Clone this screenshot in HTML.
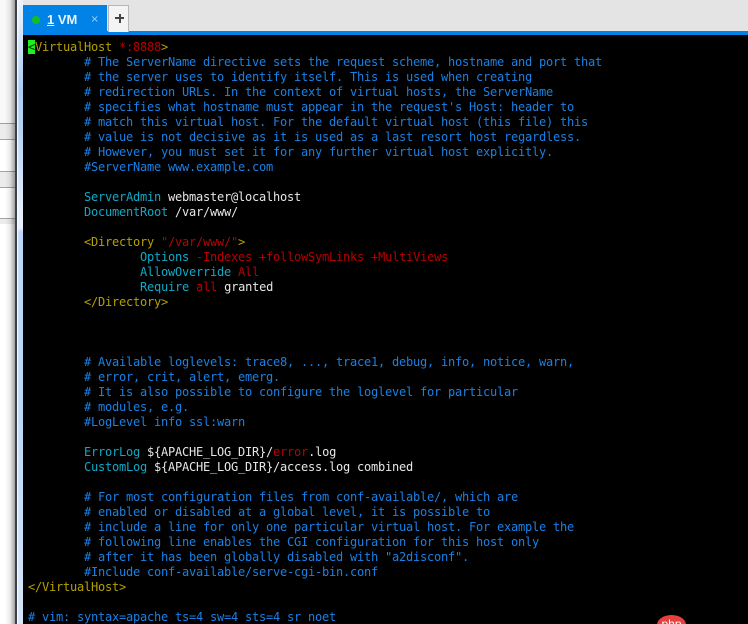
<!DOCTYPE html>
<html><head><meta charset="utf-8"><style>
html,body{margin:0;padding:0;width:748px;height:624px;overflow:hidden;background:#000}
#w{position:relative;width:748px;height:624px;overflow:hidden;background:#000}
#l{position:absolute;left:0;top:0;width:15px;height:624px;background:#fff}
.band{position:absolute;left:0;width:15px;background:#ececec}
#sh{position:absolute;left:0;top:0;width:15px;height:624px;background:linear-gradient(90deg,rgba(0,0,0,0) 0,rgba(0,0,0,0) 5px,rgba(0,0,0,.08) 10px,rgba(0,0,0,.36) 15px)}
.r{position:absolute;left:0;width:15px;height:1px;background:#a4a4a4}
#d{position:absolute;left:15px;top:0;width:2px;height:624px;background:#3c4048}
#b{position:absolute;left:17px;top:0;width:6px;height:624px;background:linear-gradient(90deg,#fff 0,rgba(255,255,255,0) 2px,rgba(255,255,255,0) 100%),linear-gradient(180deg,#eef4fc 0,#a9cdf2 90px,#b4d4f6 130px,#e6f0fb 210px,#e8f1fb 228px,#bcd8f8 232px,#bcd8f8 420px,#d4e6fa 624px)}
#bar{position:absolute;left:23px;top:0;width:725px;height:31px;background:#e4e4e4}
#strip{position:absolute;left:23px;top:31px;width:725px;height:4px;background:#0082e6}
#tab{position:absolute;left:23px;top:5px;width:84px;height:27px;background:#0082e6}
#dot{position:absolute;left:32px;top:16px;width:8px;height:8px;border-radius:50%;background:#10c020}
#t1{position:absolute;left:47px;top:12px;font:bold 13px/16px "Liberation Sans",sans-serif;color:#e8f2ff;white-space:pre}
#x{position:absolute;left:90.5px;top:13px;font:10px/14px "DejaVu Sans",sans-serif;color:#a8d0f4}
#plus{position:absolute;left:108px;top:5px;width:19px;height:26px;background:#f4f4f4;border:1px solid #b8b8b8;border-bottom:0}
#p1{position:absolute;left:115px;top:17px;width:9px;height:2px;background:#444}
#p2{position:absolute;left:118.5px;top:13.5px;width:2px;height:9px;background:#444}
#code{position:absolute;left:28px;top:40px;margin:0;font:12px/15px "DejaVu Sans Mono",monospace;letter-spacing:-.224px;color:#e6e6e6;white-space:pre}
.c{color:#1a80e4}.y{color:#b4a000}.e{color:#b80000}.a{color:#10a8c4}
.k{background:#20f020;color:#003000}
#wm{position:absolute;left:657px;top:615px;width:29px;height:20px;border-radius:50%;background:#e8403c;color:#fff;font:12px/19px "Liberation Sans",sans-serif;text-align:center}
</style></head><body><div id="w">
<div id="l"></div>
<div class="band" style="top:0;height:123px;background:#f8f8f8"></div>
<div class="band" style="top:124px;height:15px"></div>
<div class="band" style="top:171px;height:16px"></div>
<div class="band" style="top:218px;height:6px"></div>
<div class="r" style="top:123px;background:#7fa8d8"></div>
<div class="r" style="top:139px"></div>
<div class="r" style="top:171px"></div>
<div class="r" style="top:187px"></div>
<div class="r" style="top:218px"></div>
<div id="sh"></div>
<div id="d"></div><div id="b"></div>
<div id="bar"></div><div id="strip"></div><div id="tab"></div>
<div id="dot"></div>
<div id="t1"><u>1</u> VM</div>
<div id="x">×</div>
<div id="plus"></div><div id="p1"></div><div id="p2"></div>
<pre id="code"><span class="k">&lt;</span><span class="y">VirtualHost </span><span class="e">*:8888</span><span class="y">&gt;</span>
<span class="c">        # The ServerName directive sets the request scheme, hostname and port that
        # the server uses to identify itself. This is used when creating
        # redirection URLs. In the context of virtual hosts, the ServerName
        # specifies what hostname must appear in the request's Host: header to
        # match this virtual host. For the default virtual host (this file) this
        # value is not decisive as it is used as a last resort host regardless.
        # However, you must set it for any further virtual host explicitly.
        #ServerName www.example.com</span>

        <span class="a">ServerAdmin</span> webmaster@localhost
        <span class="a">DocumentRoot</span> /var/www/

        <span class="y">&lt;Directory </span><span class="e">"/var/www/"</span><span class="y">&gt;</span>
                <span class="a">Options</span> <span class="e">-Indexes +followSymLinks +MultiViews</span>
                <span class="a">AllowOverride</span> <span class="e">All</span>
                <span class="a">Require</span> <span class="e">all</span> granted
        <span class="y">&lt;/Directory&gt;</span>



<span class="c">        # Available loglevels: trace8, ..., trace1, debug, info, notice, warn,
        # error, crit, alert, emerg.
        # It is also possible to configure the loglevel for particular
        # modules, e.g.
        #LogLevel info ssl:warn</span>

        <span class="a">ErrorLog</span> ${APACHE_LOG_DIR}/<span class="e">error</span>.log
        <span class="a">CustomLog</span> ${APACHE_LOG_DIR}/access.log combined

<span class="c">        # For most configuration files from conf-available/, which are
        # enabled or disabled at a global level, it is possible to
        # include a line for only one particular virtual host. For example the
        # following line enables the CGI configuration for this host only
        # after it has been globally disabled with "a2disconf".
        #Include conf-available/serve-cgi-bin.conf</span>
<span class="y">&lt;/VirtualHost&gt;</span>

<span class="c"># vim: syntax=apache ts=4 sw=4 sts=4 sr noet</span></pre>
<div id="wm">php</div>
</div></body></html>
